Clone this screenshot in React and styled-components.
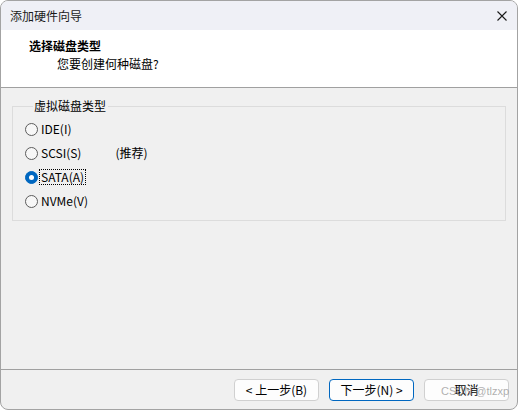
import React from "react";
import styled, { createGlobalStyle } from "styled-components";

const Global = createGlobalStyle`
  html, body { margin: 0; padding: 0; background: #ffffff; }
  body { font-family: "Noto Sans CJK SC", "Liberation Sans", sans-serif; font-size: 12px; color: #000; }
  * { box-sizing: border-box; }
`;

const Window = styled.div`
  width: 518px;
  height: 410px;
  border: 1px solid #a3a3a3;
  border-radius: 8px;
  overflow: hidden;
  display: flex;
  flex-direction: column;
  background: #f0f0f0;
  position: relative;
`;

const TitleBar = styled.div`
  height: 29px;
  flex: none;
  background: #eff0f6;
  display: flex;
  align-items: center;
  justify-content: space-between;
  padding: 0 10px 0 9px;
  font-size: 12px;
  line-height: 16px;
  color: #1b1b1b;
`;

const CloseBtn = styled.span`
  display: flex;
  width: 10px;
  height: 10px;
`;

const Header = styled.div`
  height: 58px;
  flex: none;
  background: #ffffff;
  border-bottom: 1px solid #a0a0a0;
  padding: 8px 0 0 28px;
`;

const HeaderTitle = styled.div`
  font-weight: 700;
  font-size: 12px;
  line-height: 16px;
`;

const HeaderSub = styled.div`
  margin: 2px 0 0 28px;
  font-size: 12px;
  line-height: 16px;
`;

const Content = styled.div`
  flex: 1;
  padding: 10px 11px 0 11px;
`;

const Group = styled.fieldset`
  margin: 0;
  border: 1px solid #dcdcdc;
  padding: 3px 0 7px 12px;
`;

const Legend = styled.legend`
  margin-left: 8px;
  padding: 0 2px 0 1px;
  font-size: 12px;
  line-height: 16px;
`;

const Row = styled.div`
  height: 24px;
  display: flex;
  align-items: center;
`;

const Circle = styled.span`
  width: 13px;
  height: 13px;
  border-radius: 50%;
  flex: none;
  display: flex;
  align-items: center;
  justify-content: center;
  border: 1px solid ${(p) => (p.$on ? "#0067c0" : "#5c5c5c")};
  background: ${(p) => (p.$on ? "#0067c0" : "#f7f7f7")};
  &::after {
    content: "";
    display: ${(p) => (p.$on ? "block" : "none")};
    width: 5px;
    height: 5px;
    border-radius: 50%;
    background: #ffffff;
  }
`;

const Label = styled.span`
  margin-left: 2px;
  padding: 0 1px;
  line-height: 14px;
  font-size: 12px;
  outline: ${(p) => (p.$focus ? "1px dotted #000" : "none")};
  outline-offset: 0;
`;

const Note = styled.span`
  margin-left: 33px;
  font-size: 12px;
  line-height: 16px;
`;

const Footer = styled.div`
  height: 40px;
  flex: none;
  border-top: 1px solid #a0a0a0;
  display: flex;
  justify-content: flex-end;
  gap: 10px;
  padding: 9px 8px 0 0;
`;

const Button = styled.button`
  width: 85px;
  height: 22px;
  border-radius: 4px;
  background: #fdfdfd;
  border: 1px solid ${(p) => (p.$primary ? "#0067c0" : "#d0d0d0")};
  font-family: inherit;
  font-size: 12px;
  line-height: 16px;
  color: #000;
  padding: 0;
  display: flex;
  align-items: center;
  justify-content: center;
`;

const Watermark = styled.div`
  position: absolute;
  left: 440px;
  top: 384px;
  white-space: nowrap;
  font-family: "Liberation Sans", Arial, sans-serif;
  font-size: 11px;
  line-height: 13px;
  color: rgba(140, 140, 140, 0.7);
  pointer-events: none;
`;

const options = [
  { label: "IDE(I)" },
  { label: "SCSI(S)", note: "(推荐)" },
  { label: "SATA(A)", on: true },
  { label: "NVMe(V)" },
];

export default function App() {
  return (
    <>
      <Global />
      <Window>
        <TitleBar>
          <span>添加硬件向导</span>
          <CloseBtn>
            <svg width="10" height="10" viewBox="0 0 10 10">
              <path d="M0.5 0.5 L9.5 9.5 M9.5 0.5 L0.5 9.5" stroke="#1a1a1a" strokeWidth="1.1" fill="none" />
            </svg>
          </CloseBtn>
        </TitleBar>
        <Header>
          <HeaderTitle>选择磁盘类型</HeaderTitle>
          <HeaderSub>您要创建何种磁盘?</HeaderSub>
        </Header>
        <Content>
          <Group>
            <Legend>虚拟磁盘类型</Legend>
            {options.map((o) => (
              <Row key={o.label}>
                <Circle $on={o.on} />
                <Label $focus={o.on}>{o.label}</Label>
                {o.note && <Note>{o.note}</Note>}
              </Row>
            ))}
          </Group>
        </Content>
        <Footer>
          <Button>&lt; 上一步(B)</Button>
          <Button $primary>下一步(N) &gt;</Button>
          <Button>取消</Button>
        </Footer>
        <Watermark>CSDN @tlzxp</Watermark>
      </Window>
    </>
  );
}
